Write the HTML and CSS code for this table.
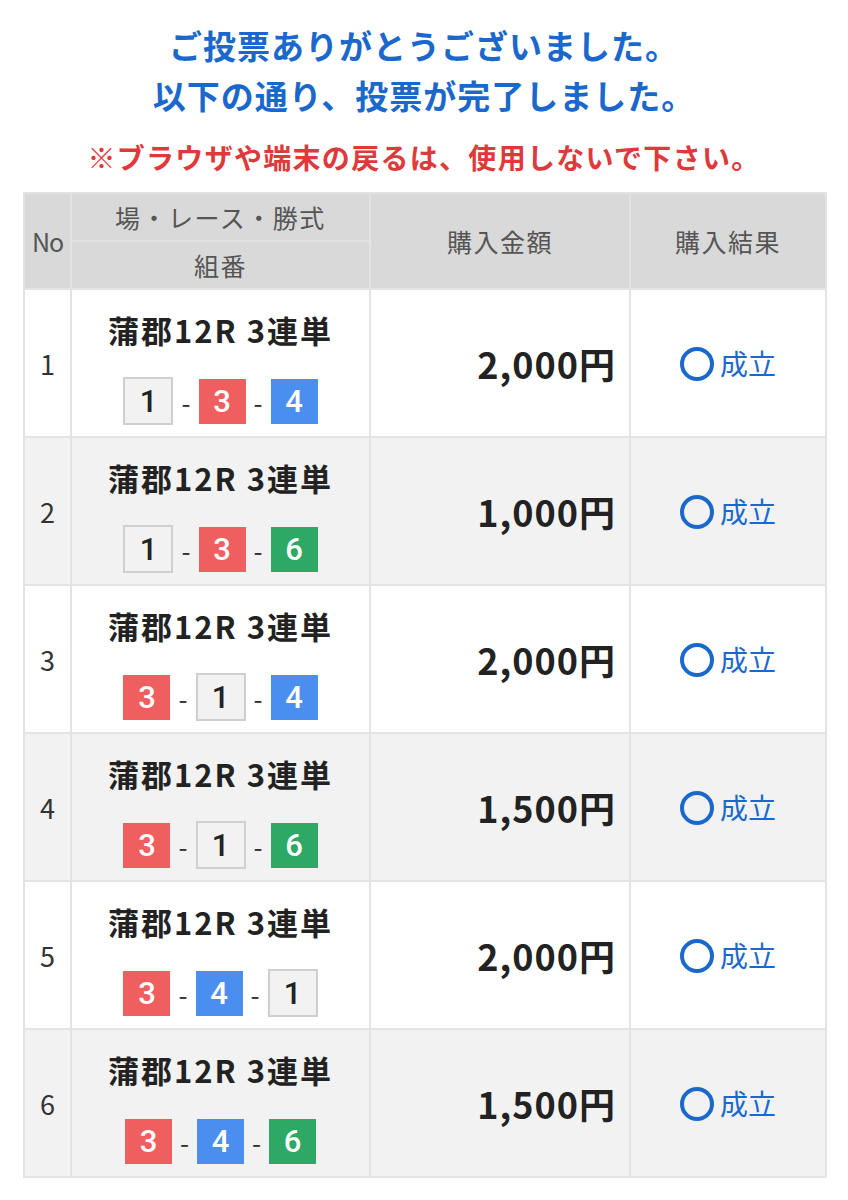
FILE: index.html
```html
<!DOCTYPE html>
<html lang="ja">
<head>
    <meta charset="UTF-8">
    <meta name="viewport" content="width=device-width, initial-scale=1.0">
    <title>投票完了</title>
    <link rel="stylesheet" href="styles.css">
</head>
<body>
    <div class="container">
        <h1 class="thanks">ご投票ありがとうございました。<br>以下の通り、投票が完了しました。</h1>
        <p class="notice">※ブラウザや端末の戻るは、使用しないで下さい。</p>

        <table class="result-table">
            <thead>
                <tr>
                    <th class="col-no" rowspan="2">No</th>
                    <th class="col-bet">場・レース・勝式</th>
                    <th class="col-amount" rowspan="2">購入金額</th>
                    <th class="col-result" rowspan="2">購入結果</th>
                </tr>
                <tr>
                    <th class="col-bet">組番</th>
                </tr>
            </thead>
            <tbody>
                <tr>
                    <td class="no">1</td>
                    <td class="bet">
                        <div class="race">蒲郡12R 3連単</div>
                        <div class="combo"><span class="waku w1">1</span><span class="dash">-</span><span class="waku w3">3</span><span class="dash">-</span><span class="waku w4">4</span></div>
                    </td>
                    <td class="amount">2,000円</td>
                    <td class="status"><span class="maru"></span>成立</td>
                </tr>
                <tr>
                    <td class="no">2</td>
                    <td class="bet">
                        <div class="race">蒲郡12R 3連単</div>
                        <div class="combo"><span class="waku w1">1</span><span class="dash">-</span><span class="waku w3">3</span><span class="dash">-</span><span class="waku w6">6</span></div>
                    </td>
                    <td class="amount">1,000円</td>
                    <td class="status"><span class="maru"></span>成立</td>
                </tr>
                <tr>
                    <td class="no">3</td>
                    <td class="bet">
                        <div class="race">蒲郡12R 3連単</div>
                        <div class="combo"><span class="waku w3">3</span><span class="dash">-</span><span class="waku w1">1</span><span class="dash">-</span><span class="waku w4">4</span></div>
                    </td>
                    <td class="amount">2,000円</td>
                    <td class="status"><span class="maru"></span>成立</td>
                </tr>
                <tr>
                    <td class="no">4</td>
                    <td class="bet">
                        <div class="race">蒲郡12R 3連単</div>
                        <div class="combo"><span class="waku w3">3</span><span class="dash">-</span><span class="waku w1">1</span><span class="dash">-</span><span class="waku w6">6</span></div>
                    </td>
                    <td class="amount">1,500円</td>
                    <td class="status"><span class="maru"></span>成立</td>
                </tr>
                <tr>
                    <td class="no">5</td>
                    <td class="bet">
                        <div class="race">蒲郡12R 3連単</div>
                        <div class="combo"><span class="waku w3">3</span><span class="dash">-</span><span class="waku w4">4</span><span class="dash">-</span><span class="waku w1">1</span></div>
                    </td>
                    <td class="amount">2,000円</td>
                    <td class="status"><span class="maru"></span>成立</td>
                </tr>
                <tr>
                    <td class="no">6</td>
                    <td class="bet">
                        <div class="race">蒲郡12R 3連単</div>
                        <div class="combo"><span class="waku w3">3</span><span class="dash">-</span><span class="waku w4">4</span><span class="dash">-</span><span class="waku w6">6</span></div>
                    </td>
                    <td class="amount">1,500円</td>
                    <td class="status"><span class="maru"></span>成立</td>
                </tr>
            </tbody>
        </table>
    </div>
</body>
</html>
```

FILE: styles.css
```css
body {
    font-family: "Noto Sans CJK JP", "Noto Sans", sans-serif;
    background-color: #fff;
    margin: 0;
    padding: 0;
    color: #222;
}

.container {
    padding: 20px 23px 0;
}

.thanks {
    margin: 0;
    text-align: center;
    color: #1b68cc;
    font-size: 33px;
    font-weight: bold;
    line-height: 50px;
    letter-spacing: 1px;
}

.notice {
    margin: 17px 0 0;
    text-align: center;
    color: #e0393b;
    font-size: 28px;
    font-weight: bold;
    line-height: 40px;
    letter-spacing: 1.3px;
}

.result-table {
    width: 802px;
    margin-top: 15px;
    border-collapse: collapse;
    table-layout: fixed;
}

.result-table th,
.result-table td {
    border: 2px solid #e3e3e3;
    padding: 0;
}

.result-table th {
    background-color: #d9d9d9;
    color: #555;
    font-size: 25px;
    font-weight: normal;
    height: 46px;
    line-height: 46px;
    letter-spacing: 1.5px;
    text-align: center;
}

.col-no {
    width: 45px;
}

.col-bet {
    width: 297px;
}

.col-amount {
    width: 258px;
}

.col-result {
    width: 194px;
}

.result-table th.col-no {
    letter-spacing: -1px;
}

.result-table tbody tr:nth-child(even) td {
    background-color: #f2f2f2;
}

.no {
    text-align: center;
    font-size: 27px;
    color: #333;
}

.bet {
    text-align: center;
    padding: 20px 0 11px !important;
}

.race {
    font-size: 31px;
    font-weight: bold;
    line-height: 40px;
    letter-spacing: 2px;
    color: #222;
}

.combo {
    display: flex;
    justify-content: center;
    align-items: center;
    height: 48px;
    margin-top: 27px;
}

.waku {
    display: inline-flex;
    align-items: center;
    justify-content: center;
    width: 47px;
    height: 45px;
    font-family: Roboto, "Noto Sans", sans-serif;
    font-size: 31px;
    font-weight: 500;
    color: #fff;
}

.w1 {
    width: 46px;
    height: 44px;
    background-color: #f2f2f2;
    border: 2px solid #cfcfcf;
    color: #222;
}

.w3 {
    background-color: #ef5f5f;
}

.w4 {
    background-color: #4a8ff0;
}

.w6 {
    background-color: #2ea865;
}

.dash {
    font-size: 26px;
    color: #333;
    margin: 0 8px;
}

.amount {
    text-align: right;
    padding-right: 13px !important;
    font-size: 36px;
    font-weight: bold;
    letter-spacing: 1px;
    color: #222;
}

.status {
    text-align: center;
    color: #1b68cc;
    font-size: 28px;
}

.maru {
    display: inline-block;
    width: 26px;
    height: 26px;
    border: 4px solid #1b68cc;
    border-radius: 50%;
    margin-right: 6px;
    vertical-align: -6px;
}
```
